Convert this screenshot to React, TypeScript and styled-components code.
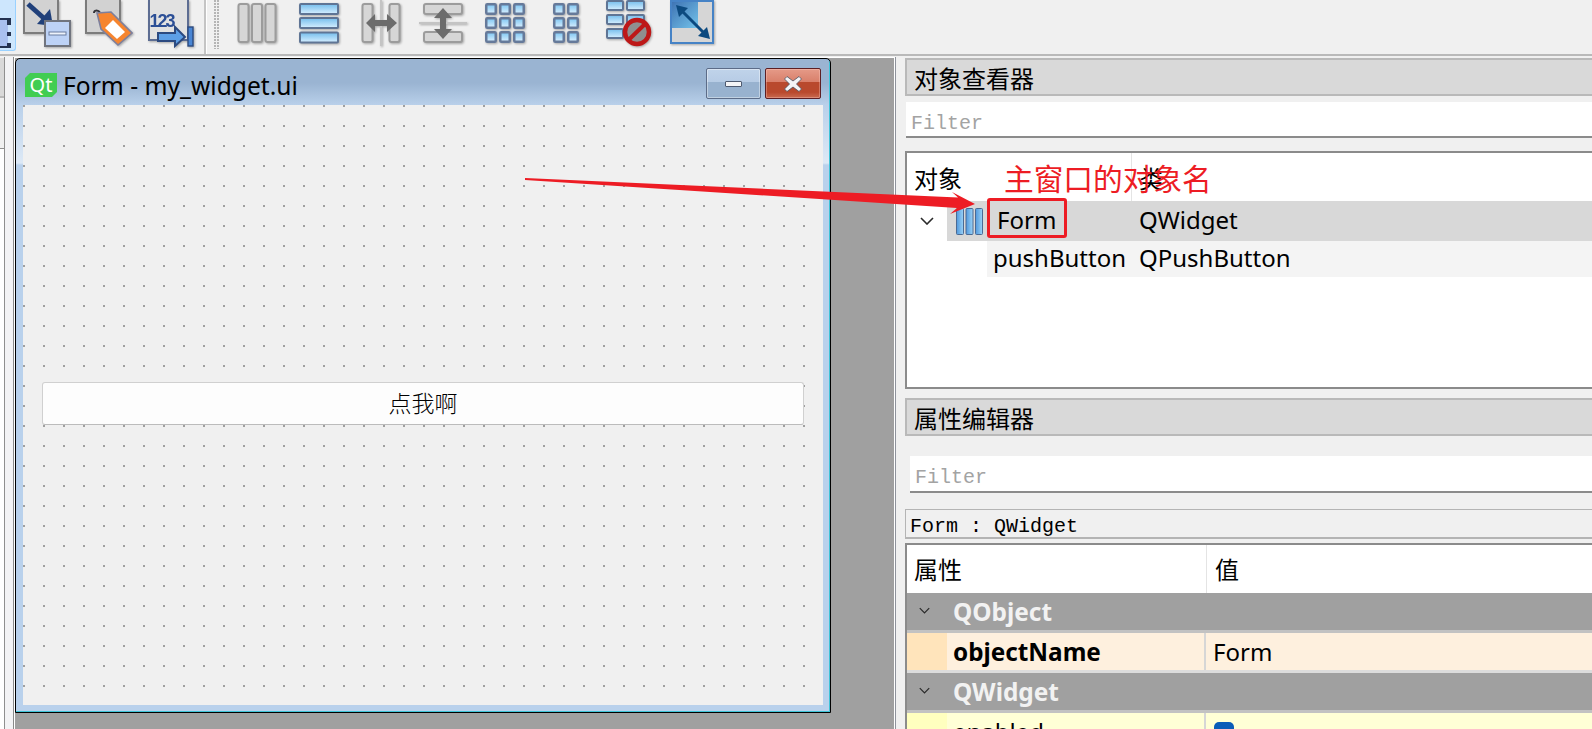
import React from "react";
import styled, { createGlobalStyle } from "styled-components";

const UI_FONT = `"Noto Sans", "Noto Sans CJK SC", sans-serif`;
const CJK_FONT = `"Noto Sans CJK SC", "Noto Sans", sans-serif`;
const MONO_FONT = `"Liberation Mono", "Noto Sans CJK SC", monospace`;

const GlobalStyle = createGlobalStyle`
  html, body {
    margin: 0;
    padding: 0;
    overflow: hidden;
    background: #f0f0f0;
  }
`;

const Page = styled.div`
  position: relative;
  width: 1592px;
  height: 729px;
  overflow: hidden;
  display: flex;
  flex-direction: column;
  background: #f0f0f0;
  color: #000;
  font-family: ${UI_FONT};
`;

/* toolbar */
const Toolbar = styled.div`
  flex: none;
  height: 54px;
  display: flex;
  align-items: flex-start;
  border-bottom: 2px solid #b9b9b9;
  overflow: hidden;
`;

const ActiveTool = styled.div`
  flex: none;
  width: 16px;
  height: 51px;
  margin-right: 7px;
  box-sizing: border-box;
  background: #cde6fd;
  border: 1px solid #99d1ff;
  border-left: none;
  border-top: none;
  border-radius: 0 0 3px 0;
  svg {
    display: block;
  }
`;

const ToolGroup = styled.div`
  flex: none;
  display: flex;
  gap: 14px;
`;

const ToolIcon = styled.svg`
  flex: none;
  display: block;
  width: 48px;
  height: 48px;
  filter: drop-shadow(1px 1px 1px rgba(0, 0, 0, 0.3));
`;

const ToolSeparator = styled.div`
  flex: none;
  width: 2px;
  height: 54px;
  margin-left: 9px;
  background: #c4c4c4;
  border-right: 1px solid #fff;
`;

const ToolHandle = styled.div`
  flex: none;
  width: 5px;
  height: 49px;
  margin-left: 7px;
  margin-right: 14px;
  background-image: radial-gradient(circle at 1px 1px, #b5b5b5 1px, transparent 1px);
  background-size: 3px 3px;
`;

/* main area */
const Body = styled.div`
  flex: 1;
  min-height: 0;
  display: flex;
  padding-top: 1px;
`;

const LeftDock = styled.div`
  flex: none;
  width: 13px;
  display: flex;
  background: #f3f3f5;
`;

const LeftSliver = styled.div`
  flex: none;
  width: 4px;
  display: flex;
  flex-direction: column;
  border-right: 1px solid #8f8f8f;
  background: #f0f0f0;
`;

const LeftSliverHead = styled.div`
  flex: none;
  height: 38px;
  margin-top: 1px;
  background: #d9d9d9;
  border-bottom: 2px solid #b9b9b9;
`;

const LeftSliverBox = styled.div`
  flex: 1;
  margin-top: 50px;
  background: #fff;
  border-top: 1px solid #8f8f8f;
`;

const MdiArea = styled.div`
  flex: none;
  width: 881px;
  box-sizing: border-box;
  background: #a0a0a0;
  border: 1px solid #fff;
  box-shadow: -1px 0 0 #8a8a8a, 1px 0 0 #8f939c;
  border-bottom: none;
  margin-left: 1px;
`;

const FormWindow = styled.div`
  width: 816px;
  height: 655px;
  box-sizing: border-box;
  display: flex;
  flex-direction: column;
  border: 1px solid #000;
  border-radius: 5px 5px 0 0;
  box-shadow: inset -1px -1px 0 #3fc4d8;
  background: linear-gradient(
    to bottom,
    #9ab4d2 0,
    #9ab4d2 24px,
    #b9d0ea 46px,
    #dde9f6 104px,
    #b9d1ec 106px
  );
`;

const TitleBar = styled.div`
  flex: none;
  height: 46px;
  display: flex;
  align-items: flex-start;
  padding-left: 9px;
`;

const QtLogo = styled.div`
  flex: none;
  width: 32px;
  height: 24px;
  margin-top: 14px;
  display: flex;
  align-items: center;
  justify-content: center;
  background: #41cd52;
  clip-path: polygon(5px 0, 100% 0, 100% 19px, 27px 100%, 0 100%, 0 5px);
  color: #fff;
  font-size: 20px;
  line-height: 24px;
`;

const WindowTitle = styled.div`
  margin-left: 6px;
  margin-top: 9px;
  font-size: 24.6px;
  line-height: 36px;
  white-space: nowrap;
`;

const WindowButtons = styled.div`
  margin-left: auto;
  margin-right: 9px;
  margin-top: 9px;
  display: flex;
  gap: 4px;
`;

const WindowButton = styled.div<{ $close?: boolean }>`
  width: ${(p) => (p.$close ? 56 : 55)}px;
  height: 31px;
  box-sizing: border-box;
  display: flex;
  align-items: center;
  justify-content: center;
  border-radius: 2px;
  border: 1px solid ${(p) => (p.$close ? "#5d1f24" : "#5c6c88")};
  box-shadow: inset 0 0 0 1px ${(p) => (p.$close ? "rgba(255,210,200,.35)" : "rgba(255,255,255,.4)")};
  background: ${(p) =>
    p.$close
      ? "linear-gradient(to bottom, #e59a88 0, #d9806b 44%, #b9492d 45%, #b9492d 80%, #c96a50 100%)"
      : "linear-gradient(to bottom, #c0d3ea 0, #b7cce5 44%, #98b2cf 45%, #98b2cf 100%)"};
`;

const MinimizeGlyph = styled.div`
  width: 17px;
  height: 6px;
  box-sizing: border-box;
  background: #f4f4f6;
  border: 1px solid #4e5a70;
  border-radius: 1px;
`;

const FormCanvas = styled.div`
  flex: 1;
  margin: 0 7px 7px;
  padding: 277px 19px 0;
  background-color: #f0f0f0;
  background-image: radial-gradient(circle at 1px 1px, #a0a0a0 1px, transparent 1px);
  background-size: 20px 20px;
`;

const PushButton = styled.div`
  width: 762px;
  height: 43px;
  box-sizing: border-box;
  padding-bottom: 3px;
  display: flex;
  align-items: center;
  justify-content: center;
  background: #fdfdfd;
  border: 1px solid #d0d0d0;
  border-bottom-color: #bcbcbc;
  border-radius: 3px;
  font-family: ${CJK_FONT};
  font-weight: 300;
  font-size: 23px;
`;

/* right docks */
const RightDock = styled.div`
  flex: none;
  margin-left: 10px;
  flex-grow: 1;
  min-width: 0;
  display: flex;
  flex-direction: column;
  padding-top: 1px;
`;

const DockHeader = styled.div<{ $gap?: number }>`
  flex: none;
  height: 38px;
  box-sizing: border-box;
  margin-top: ${(p) => p.$gap ?? 0}px;
  display: flex;
  align-items: center;
  padding-left: 7px;
  background: #d9d9d9;
  border-top: 2px solid #b9b9b9;
  border-bottom: 2px solid #b9b9b9;
  border-left: 2px solid #b9b9b9;
  font-family: ${CJK_FONT};
  font-size: 24px;
`;

const FilterInput = styled.div<{ $gap: number; $inset: number; $textAt: number }>`
  flex: none;
  height: ${(p) => (p.$inset > 1 ? 37 : 36)}px;
  box-sizing: border-box;
  margin-top: ${(p) => p.$gap}px;
  margin-left: ${(p) => p.$inset}px;
  padding-left: ${(p) => p.$textAt}px;
  padding-top: 8px;
  display: flex;
  align-items: center;
  background: #fff;
  border-bottom: 2px solid #8b8b8b;
  color: #a3a3a3;
  font-family: ${MONO_FONT};
  font-size: 20px;
`;

const TreeFrame = styled.div`
  flex: none;
  height: 238px;
  box-sizing: border-box;
  margin-top: 13px;
  background: #fff;
  border: 2px solid #8b8b8b;
  border-right: none;
`;

const TreeHeader = styled.div`
  height: 48px;
  display: flex;
  align-items: center;
  font-family: ${CJK_FONT};
  font-size: 24px;
`;

const TreeHeaderCell = styled.div<{ $width?: number }>`
  flex: ${(p) => (p.$width ? "none" : 1)};
  width: ${(p) => p.$width ?? 0}px;
  height: 100%;
  box-sizing: border-box;
  display: flex;
  align-items: center;
  padding-left: 7px;
  border-right: ${(p) => (p.$width ? "1px solid #e4e4e4" : "none")};
`;

const TreeRow = styled.div`
  display: flex;
  font-size: 24px;
`;

const TreeIndent = styled.div<{ $width: number }>`
  flex: none;
  width: ${(p) => p.$width}px;
  display: flex;
  align-items: center;
  justify-content: center;
`;

const TreeRowBody = styled.div<{ $selected?: boolean }>`
  flex: 1;
  display: flex;
  align-items: center;
  height: ${(p) => (p.$selected ? 40 : 36)}px;
  box-sizing: border-box;
  padding-bottom: 4px;
  background: ${(p) => (p.$selected ? "#d8d8d8" : "#f4f4f4")};
`;

const TreeIconSlot = styled.div`
  flex: none;
  width: 40px;
  padding-left: 9px;
  padding-top: 4px;
  box-sizing: border-box;
  svg {
    display: block;
  }
`;

const TreeName = styled.div<{ $pad: number }>`
  flex: none;
  width: 145px;
  box-sizing: border-box;
  padding-left: ${(p) => p.$pad}px;
  white-space: nowrap;
`;

const TreeType = styled.div`
  padding-left: 7px;
`;

const ClassBar = styled.div`
  flex: none;
  height: 30px;
  box-sizing: border-box;
  margin-top: 16px;
  padding-left: 4px;
  padding-top: 6px;
  display: flex;
  align-items: center;
  background: #f0f0f0;
  border: 1px solid #b4b4b4;
  border-bottom-width: 2px;
  border-right: none;
  font-family: ${MONO_FONT};
  font-size: 20px;
  white-space: pre;
`;

const PropertyTable = styled.div`
  flex: 1;
  min-height: 0;
  margin-top: 4px;
  background: #fff;
  border-top: 2px solid #8b8b8b;
  border-left: 2px solid #8b8b8b;
`;

const PropertyHead = styled.div`
  height: 48px;
  display: flex;
  font-family: ${CJK_FONT};
  font-size: 24px;
`;

const PropertyHeadCell = styled.div<{ $first?: boolean }>`
  flex: ${(p) => (p.$first ? "none" : 1)};
  width: ${(p) => (p.$first ? 300 : 0)}px;
  box-sizing: border-box;
  display: flex;
  align-items: center;
  padding-left: ${(p) => (p.$first ? 7 : 8)}px;
  padding-bottom: 2px;
  border-right: ${(p) => (p.$first ? "1px solid #e4e4e4" : "none")};
`;

const GroupRow = styled.div`
  height: 40px;
  box-sizing: border-box;
  display: flex;
  align-items: center;
  background: #a0a0a0;
  border-bottom: 3px solid #c2c2c2;
  color: #f2f2f2;
  font-weight: 700;
  font-size: 24.4px;
`;

const GroupChevron = styled.div`
  flex: none;
  width: 46px;
  display: flex;
  justify-content: center;
  padding-right: 11px;
  padding-bottom: 3px;
  box-sizing: border-box;
  svg {
    width: 11px;
    height: 7px;
  }
`;

const PropertyRow = styled.div<{ $tone: "orange" | "yellow" }>`
  height: 40px;
  box-sizing: border-box;
  display: flex;
  background: ${(p) => (p.$tone === "orange" ? "#fef0de" : "#ffffd6")};
  border-bottom: 3px solid #dcdcdc;
  font-size: 24px;
`;

const PropertyMarker = styled.div<{ $tone: "orange" | "yellow" }>`
  flex: none;
  width: 40px;
  background: ${(p) => (p.$tone === "orange" ? "#ffe4bb" : "#ffffbf")};
`;

const PropertyName = styled.div<{ $bold?: boolean }>`
  flex: none;
  width: 259px;
  box-sizing: border-box;
  padding-left: 6px;
  display: flex;
  align-items: center;
  font-weight: ${(p) => (p.$bold ? 700 : 400)};
  font-size: ${(p) => (p.$bold ? 24.3 : 24)}px;
  border-right: 2px solid #d6d6d6;
`;

const PropertyValue = styled.div`
  flex: 1;
  padding-left: 7px;
  display: flex;
  align-items: center;
`;

const CheckMark = styled.div`
  width: 20px;
  height: 20px;
  margin-top: 1px;
  margin-left: 1px;
  border-radius: 5px;
  background: #0a5cb8;
`;

/* red annotation drawn over the screenshot */
const AnnotationArrow = styled.svg`
  position: absolute;
  left: 0;
  top: 0;
  width: 1592px;
  height: 729px;
  pointer-events: none;
`;

const AnnotationLabel = styled.div`
  position: absolute;
  left: 1004px;
  top: 157px;
  color: #ed1c24;
  font-family: ${CJK_FONT};
  font-size: 29.7px;
  line-height: 42px;
  white-space: nowrap;
`;

const AnnotationBox = styled.div`
  position: absolute;
  left: 987px;
  top: 198px;
  width: 80px;
  height: 40px;
  box-sizing: border-box;
  border: 3px solid #ed1c24;
  border-radius: 3px;
`;

const GradientDefs = styled.svg`
  position: absolute;
  width: 0;
  height: 0;
`;

const Chevron = () => (
  <svg width="14" height="8" viewBox="0 0 14 8" fill="none">
    <polyline points="1,1 7,7 13,1" stroke="#2a2a2a" strokeWidth="1.6" />
  </svg>
);

const GridCell = ({ x, y }: { x: number; y: number }) => (
  <rect x={x} y={y} width="9.5" height="9.5" rx="1" fill="url(#cellFill)" stroke="#667a9a" strokeWidth="2.5" />
);

const Bar = ({ x, y, w, h }: { x: number; y: number; w: number; h: number }) => (
  <rect x={x} y={y} width={w} height={h} rx="2" fill="#d6d6d6" stroke="#9c9c9c" strokeWidth="2" />
);

const BlueBar = ({ x, y, w, h }: { x: number; y: number; w: number; h: number }) => (
  <rect x={x} y={y} width={w} height={h} rx="1" fill="url(#barFill)" stroke="#5f7595" strokeWidth="2" />
);

const Toolbox = () => (
  <ToolGroup>
    <ToolIcon viewBox="0 0 48 48">
      <rect x="1" y="-4" width="34" height="37" fill="#d2d2d2" stroke="#7c7c7c" strokeWidth="2" />
      <line x1="5" y1="4" x2="24" y2="21" stroke="#20407a" strokeWidth="5" />
      <polygon points="14,24 30,26 27,9" fill="#20407a" />
      <rect x="22" y="21" width="25" height="25" fill="#bdd2f6" stroke="#70747e" strokeWidth="2" />
      <rect x="26" y="32" width="17" height="3" fill="#eef3fb" stroke="#6a7da0" strokeWidth="1" />
    </ToolIcon>
    <ToolIcon viewBox="0 0 48 48">
      <rect x="1" y="-4" width="34" height="37" fill="#d2d2d2" stroke="#7c7c7c" strokeWidth="2" />
      <path d="M9 13 C9 10 12 10 15 12" fill="none" stroke="#33333a" strokeWidth="2" />
      <polygon points="12,13 26,12 47,33 33,45 16,29" fill="#f6852f" stroke="#7d7f9c" strokeWidth="1.6" />
      <polygon points="28,20 40,32 32,39 20,28" fill="#fff" />
    </ToolIcon>
    <ToolIcon viewBox="0 0 48 48">
      <rect x="2" y="-4" width="39" height="44" fill="#e2e2e2" stroke="#5d6d92" strokeWidth="2" />
      <text
        x="2.5"
        y="27"
        fontFamily="Liberation Sans, sans-serif"
        fontSize="18"
        fontWeight="700"
        fill="#2c4f96"
        textLength="26"
      >
        123
      </text>
      <polygon
        points="11,33 28,33 28,27 38,37 28,46 28,41 11,41"
        fill="#5d9fe6"
        stroke="#2c4a80"
        strokeWidth="2"
      />
      <rect x="41" y="27" width="5" height="19" fill="#4a86d4" stroke="#2c4a80" strokeWidth="1.4" />
    </ToolIcon>
  </ToolGroup>
);

const LayoutTools = () => (
  <ToolGroup>
    <ToolIcon viewBox="0 0 48 48">
      <Bar x={5.5} y={4} w={10} h={38} />
      <Bar x={19} y={4} w={10} h={38} />
      <Bar x={32.5} y={4} w={10} h={38} />
    </ToolIcon>
    <ToolIcon viewBox="0 0 48 48">
      <BlueBar x={5} y={4} w={38} h={10} />
      <BlueBar x={5} y={18} w={38} h={10} />
      <BlueBar x={5} y={32.5} w={38} h={10} />
    </ToolIcon>
    <ToolIcon viewBox="0 0 48 48">
      <Bar x={5.5} y={4} w={10} h={38} />
      <Bar x={32.5} y={4} w={10} h={38} />
      <rect x="23" y="0" width="2" height="46" fill="#c4c4c4" />
      <polygon points="9,23 18,14 18,20 30,20 30,14 40,23 30,32 30,26 18,26 18,32" fill="#6c6c6c" />
    </ToolIcon>
    <ToolIcon viewBox="0 0 48 48">
      <Bar x={5} y={4} w={38} h={10} />
      <Bar x={5} y={32} w={38} h={10} />
      <rect x="0" y="22" width="48" height="2" fill="#c4c4c4" />
      <polygon points="24,8 33,18 27,18 27,29 33,29 24,39 15,29 21,29 21,18 15,18" fill="#6c6c6c" />
    </ToolIcon>
    <ToolIcon viewBox="0 0 48 48">
      {[5.25, 19.25, 33.25].flatMap((x) =>
        [4.25, 18.25, 32.25].map((y) => <GridCell key={`${x}-${y}`} x={x} y={y} />)
      )}
    </ToolIcon>
    <ToolIcon viewBox="0 0 48 48">
      {[11.25, 25.25].flatMap((x) =>
        [4.25, 18.25, 32.25].map((y) => <GridCell key={`${x}-${y}`} x={x} y={y} />)
      )}
    </ToolIcon>
    <ToolIcon viewBox="0 0 48 48">
      <BlueBar x={2} y={1} w={16} h={9} />
      <BlueBar x={22} y={1} w={17} h={9} />
      <BlueBar x={2} y={15} w={16} h={9} />
      <BlueBar x={22} y={15} w={17} h={9} />
      <BlueBar x={2} y={29} w={16} h={9} />
      <circle cx="32" cy="32" r="12" fill="#8f8f8f" stroke="#bd1818" strokeWidth="4.5" />
      <line x1="23.5" y1="40" x2="40" y2="24" stroke="#bd1818" strokeWidth="4" />
    </ToolIcon>
    <ToolIcon viewBox="0 0 48 48">
      <rect x="4" y="1" width="42" height="42" fill="#d6d6d6" stroke="#4683c6" strokeWidth="2" />
      <rect x="5" y="2" width="26" height="26" fill="url(#adjustFill)" />
      <line x1="12" y1="8" x2="40" y2="36" stroke="#0c4a80" strokeWidth="3" />
      <polygon points="9,5 21,8 12,17" fill="#0c4a80" />
      <polygon points="43,39 31,36 40,27" fill="#0c4a80" />
    </ToolIcon>
  </ToolGroup>
);

export default function App() {
  return (
    <Page>
      <GlobalStyle />
      <GradientDefs>
        <defs>
          <linearGradient id="cellFill" x1="0" y1="0" x2="0" y2="1">
            <stop offset="0" stopColor="#7cc5f2" />
            <stop offset="1" stopColor="#dbf0ff" />
          </linearGradient>
          <linearGradient id="barFill" x1="0" y1="0" x2="0" y2="1">
            <stop offset="0" stopColor="#74bdec" />
            <stop offset="1" stopColor="#d7efff" />
          </linearGradient>
          <linearGradient id="adjustFill" x1="0" y1="0" x2="1" y2="1">
            <stop offset="0" stopColor="#3f74b4" />
            <stop offset="1" stopColor="#74c3ea" />
          </linearGradient>
          <linearGradient id="treeBar" x1="0" y1="0" x2="1" y2="0">
            <stop offset="0" stopColor="#4f97dc" />
            <stop offset="1" stopColor="#9bd3f7" />
          </linearGradient>
        </defs>
      </GradientDefs>

      <Toolbar>
        <ActiveTool>
          <svg width="15" height="50" viewBox="0 0 15 50">
            <rect x="0" y="20" width="8" height="26" fill="#a9c0ef" />
            <rect x="0" y="18" width="8" height="2" fill="#243250" />
            <rect x="0" y="46" width="8" height="2" fill="#243250" />
            <rect x="7" y="18" width="4" height="7" fill="#243250" />
            <rect x="7" y="32" width="4" height="4" fill="#243250" />
            <rect x="7" y="43" width="4" height="5" fill="#243250" />
          </svg>
        </ActiveTool>
        <Toolbox />
        <ToolSeparator />
        <ToolHandle />
        <LayoutTools />
      </Toolbar>

      <Body>
        <LeftDock>
          <LeftSliver>
            <LeftSliverHead />
            <LeftSliverBox />
          </LeftSliver>
        </LeftDock>
        <MdiArea>
          <FormWindow>
            <TitleBar>
              <QtLogo>Qt</QtLogo>
              <WindowTitle>Form - my_widget.ui</WindowTitle>
              <WindowButtons>
                <WindowButton>
                  <MinimizeGlyph />
                </WindowButton>
                <WindowButton $close>
                  <svg width="18" height="16" viewBox="0 0 18 16">
                    <polygon
                      points="0.5,3 3,0.5 9,5 15,0.5 17.5,3 12.5,8 17.5,13 15,15.5 9,11 3,15.5 0.5,13 5.5,8"
                      fill="#f4f4f6"
                      stroke="#4a5060"
                      strokeWidth="0.8"
                    />
                  </svg>
                </WindowButton>
              </WindowButtons>
            </TitleBar>
            <FormCanvas>
              <PushButton>点我啊</PushButton>
            </FormCanvas>
          </FormWindow>
        </MdiArea>

        <RightDock>
          <DockHeader>对象查看器</DockHeader>
          <FilterInput $gap={6} $inset={1} $textAt={5}>
            Filter
          </FilterInput>
          <TreeFrame>
            <TreeHeader>
              <TreeHeaderCell $width={225}>对象</TreeHeaderCell>
              <TreeHeaderCell>类</TreeHeaderCell>
            </TreeHeader>
            <TreeRow>
              <TreeIndent $width={40}>
                <Chevron />
              </TreeIndent>
              <TreeRowBody $selected>
                <TreeIconSlot>
                  <svg width="28" height="27" viewBox="0 0 28 27">
                    <rect x="0.5" y="0.5" width="7" height="26" rx="1" fill="url(#treeBar)" stroke="#4a6a94" />
                    <rect x="10" y="0.5" width="7" height="26" rx="1" fill="url(#treeBar)" stroke="#4a6a94" />
                    <rect x="19.5" y="0.5" width="7" height="26" rx="1" fill="url(#treeBar)" stroke="#4a6a94" />
                  </svg>
                </TreeIconSlot>
                <TreeName $pad={10}>Form</TreeName>
                <TreeType>QWidget</TreeType>
              </TreeRowBody>
            </TreeRow>
            <TreeRow>
              <TreeIndent $width={80} />
              <TreeRowBody>
                <TreeName $pad={6}>pushButton</TreeName>
                <TreeType>QPushButton</TreeType>
              </TreeRowBody>
            </TreeRow>
          </TreeFrame>

          <DockHeader $gap={9}>属性编辑器</DockHeader>
          <FilterInput $gap={20} $inset={5} $textAt={5}>
            Filter
          </FilterInput>
          <ClassBar>Form : QWidget</ClassBar>
          <PropertyTable>
            <PropertyHead>
              <PropertyHeadCell $first>属性</PropertyHeadCell>
              <PropertyHeadCell>值</PropertyHeadCell>
            </PropertyHead>
            <GroupRow>
              <GroupChevron>
                <Chevron />
              </GroupChevron>
              QObject
            </GroupRow>
            <PropertyRow $tone="orange">
              <PropertyMarker $tone="orange" />
              <PropertyName $bold>objectName</PropertyName>
              <PropertyValue>Form</PropertyValue>
            </PropertyRow>
            <GroupRow>
              <GroupChevron>
                <Chevron />
              </GroupChevron>
              QWidget
            </GroupRow>
            <PropertyRow $tone="yellow">
              <PropertyMarker $tone="yellow" />
              <PropertyName>enabled</PropertyName>
              <PropertyValue>
                <CheckMark />
              </PropertyValue>
            </PropertyRow>
          </PropertyTable>
        </RightDock>
      </Body>

      <AnnotationLabel>主窗口的对象名</AnnotationLabel>
      <AnnotationBox />
      <AnnotationArrow viewBox="0 0 1592 729">
        <polygon
          points="525,178 958,197.5 952,192 975,204 950,214 957,208 525,180"
          fill="#ed1c24"
        />
      </AnnotationArrow>
    </Page>
  );
}
